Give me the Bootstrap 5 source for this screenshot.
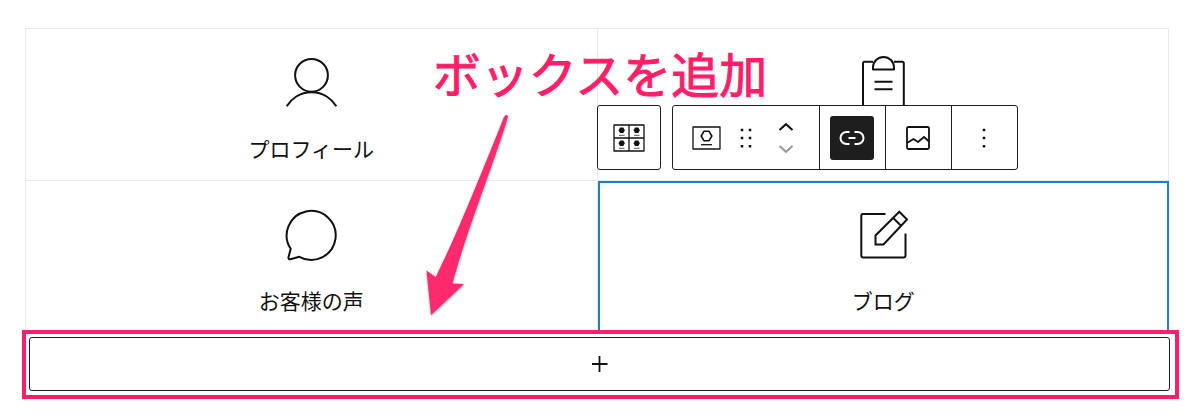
<!DOCTYPE html>
<html lang="ja">
<head>
<meta charset="utf-8">
<meta name="viewport" content="width=device-width, initial-scale=1">
<title>ボックスを追加</title>
<link href="https://cdn.jsdelivr.net/npm/bootstrap@5.3.0/dist/css/bootstrap.min.css" rel="stylesheet">
<style>
  body { font-family: "Noto Sans CJK JP", sans-serif; color: #111; background: #fff; }
  svg { display: block; overflow: visible; fill: none; stroke: #111; stroke-width: 2; stroke-linejoin: round; }
  .editor { padding: 28px 31px 16px 25px; }
  .box-grid { border-top: 1px solid #eaeaea; border-left: 1px solid #eaeaea; }
  .box-item { height: 152px; padding-top: 28px; gap: 23px; border-right: 1px solid #eaeaea; border-bottom: 1px solid #eaeaea; }
  .box-item.selected { border: 0; height: 153px; outline: 2px solid #2080bc; outline-offset: -2px; }
  .box-label { font-size: 21px; line-height: 32px; }
  .block-toolbar { bottom: 100%; left: 0; margin: 0 0 11px -1px; gap: 11px; z-index: 2; }
  .tool-group { background: #fff; border: 1px solid #1e1e1e; border-radius: 3px; height: 65px; }
  .tool-group > * + * { border-left: 1px solid #1e1e1e !important; }
  .tool { background: none; border: 0; padding: 0; display: flex; align-items: center; justify-content: center; }
  .tool-cell { width: 66px; }
  .tool-single { width: 62px; }
  .tool-movers { width: 146px; padding-left: 19px; gap: 18px; }
  .tool-arrows { gap: 12px; margin-left: 7px; }
  .tool-link { width: 44px; height: 44px; background: #1e1e1e; border-radius: 3px; }
  .line-thin { stroke-width: 1.3; }
  .line-medium { stroke-width: 1.8; }
  .line-dots { stroke-width: 2.5; }
  .add-frame { border: 4px solid #ff1f69; margin: -4px -10px 0 -3px; padding: 3px 5px 4px 3px; background: #fff; }
  .add-button { height: 54px; background: #fff; border: 1px solid #1e1e1e; border-radius: 3px; }
  .callout-text { top: 36px; left: 0; right: 0; font-size: 48px; line-height: 72px; font-weight: 400; color: #ff1f69; -webkit-text-stroke: 1px #ff1f69; z-index: 3; pointer-events: none; }
  .callout-arrow { top: 110px; left: 35%; z-index: 3; fill: #ff2a6d; stroke: none; filter: drop-shadow(0 1px 1px #0006); pointer-events: none; }
</style>
</head>
<body>
<main class="editor position-relative">
  <div class="box-grid row row-cols-2 g-0">
    <div class="col box-item d-flex flex-column align-items-center">
      <svg width="52" height="52" viewBox="0 0 52 52"><circle cx="26.5" cy="18.3" r="16.4"/><path d="M1.700 49.3A28.8 28.8 0 0 1 51.300 49.3"/></svg>
      <div class="box-label">プロフィール</div>
    </div>
    <div class="col box-item d-flex flex-column align-items-center">
      <svg width="52" height="52" viewBox="0 0 52 52"><path d="M16 4.8H7.500Q6 4.8 6 6.300V51H46.800V6.300Q46.800 4.8 45.300 4.8H37"/><path d="M16 12.500V10.500A10.500 10.500 0 0 1 37 10.500V12.500Z"/><path d="M17.500 24.700H35.500M17.500 32.300H35.500"/></svg>
    </div>
    <div class="col box-item d-flex flex-column align-items-center">
      <svg width="52" height="52" viewBox="0 0 52 52"><path d="M14.300 47.800L5.500 50.300Q3.200 50.600 3.500 48.300L5.700 39.800A24.500 24.500 0 1 1 14.300 47.800Z"/></svg>
      <div class="box-label">お客様の声</div>
    </div>
    <div class="col box-item selected position-relative d-flex flex-column align-items-center">
      <div class="block-toolbar position-absolute d-flex" role="toolbar" aria-label="ブロックツール">
        <div class="tool-group d-flex">
          <button type="button" class="tool tool-single" aria-label="ボックスメニュー">
            <svg class="line-thin" width="32" height="28" viewBox="0 0 32 28"><path d="M1 1H31V27H1ZM16 1V27M1 14H31"/><g fill="#111" stroke="none"><path id="hex" d="M5.500 6.300L7.100 3.500H10.300L11.900 6.300L10.300 9.100H7.100Z"/><use href="#hex" x="15"/><use href="#hex" y="13"/><use href="#hex" x="15" y="13"/></g><path stroke="#777" d="M6 11.300H11.500M21 11.300H26.500M6 24.300H11.500M21 24.300H26.500"/></svg>
          </button>
        </div>
        <div class="tool-group d-flex">
          <div class="tool-movers d-flex align-items-center">
            <button type="button" class="tool" aria-label="ボックス">
              <svg class="line-thin" width="29" height="24" viewBox="0 0 29 24"><path d="M1 1H28V23H1Z"/><path stroke-width="1.6" d="M9.200 10L11.900 5.300H17.100L19.800 10L17.100 14.700H11.900Z"/><path d="M9 18.700H20"/></svg>
            </button>
            <button type="button" class="tool" aria-label="ドラッグ">
              <svg class="line-dots" width="14" height="20" viewBox="0 0 14 20"><path stroke-dasharray="2.500 5.600" d="M3 .7V20M11 .7V20"/></svg>
            </button>
            <div class="tool-arrows d-flex flex-column">
              <button type="button" class="tool" aria-label="上に移動"><svg width="16" height="10" viewBox="0 0 16 10"><path stroke-linejoin="miter" d="M1.500 8L8 2.200L14.500 8"/></svg></button>
              <button type="button" class="tool" aria-label="下に移動"><svg width="16" height="10" viewBox="0 0 16 10"><path stroke="#999" stroke-linejoin="miter" d="M1.500 2L8 7.800L14.500 2"/></svg></button>
            </div>
          </div>
          <div class="tool-cell d-flex align-items-center justify-content-center">
            <button type="button" class="tool tool-link" aria-label="リンク">
              <svg width="26" height="16" viewBox="0 0 26 16"><path stroke="#fff" d="M10.500 2H7.500A6 6 0 0 0 7.500 14H10.500M15.500 2H18.500A6 6 0 0 1 18.500 14H15.500M9.500 8H16.500"/></svg>
            </button>
          </div>
          <button type="button" class="tool tool-cell" aria-label="画像">
            <svg class="line-medium" width="24" height="24" viewBox="0 0 24 24"><rect x="1" y="1" width="22" height="22" rx="1.500"/><path d="M1 17L7.500 13L12 16L18 11L23 15.500"/></svg>
          </button>
          <button type="button" class="tool tool-cell" aria-label="オプション">
            <svg class="line-dots" width="4" height="20" viewBox="0 0 4 20"><path stroke-dasharray="2.500 5.600" d="M2 .7V20"/></svg>
          </button>
        </div>
      </div>
      <svg width="52" height="52" viewBox="0 0 52 52"><path d="M28.500 4.900H6Q4.300 4.900 4.300 6.900V46.500Q4.300 48.500 6.300 48.500H46.500Q48.500 48.500 48.500 46.500V24.500"/><path stroke-linejoin="miter" d="M18.500 35.500V26.500L42.300 2.700L50 10.500L26.500 35.500ZM36 8.800L44 16.800"/></svg>
      <div class="box-label">ブログ</div>
    </div>
  </div>
  <div class="add-frame position-relative">
    <button type="button" class="add-button w-100 d-flex align-items-center justify-content-center p-0" aria-label="ボックスを追加">
      <svg class="line-medium" width="16" height="16" viewBox="0 0 16 16"><path d="M7.500 0V16M0 8H15.500"/></svg>
    </button>
  </div>
  <div class="callout-text position-absolute text-center">ボックスを追加</div>
  <svg class="callout-arrow position-absolute" width="94" height="210" viewBox="0 0 94 210"><path d="M6.500 160.500L15.700 167C38 122 62 62 84 7Q86.500 3.500 88 6.500C76 48 46 122 32.500 173.500L44 174L11 205Z"/></svg>
</main>
<script src="https://cdn.jsdelivr.net/npm/bootstrap@5.3.0/dist/js/bootstrap.bundle.min.js"></script>
</body>
</html>
